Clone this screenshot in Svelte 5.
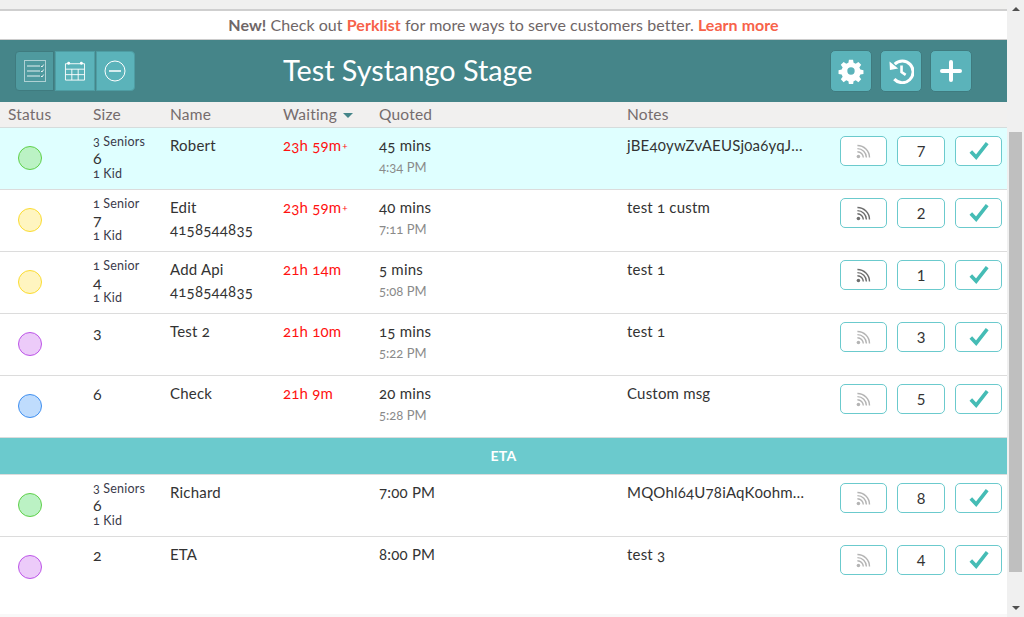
<script>
	const rows = [
		{ status: 'green', seniors: '3 Seniors', size: 6, kids: '1 Kid', name: 'Robert', waiting: '23h 59m', plus: true, quoted: '45 mins', at: '4:34 PM', notes: 'jBE40ywZvAEUSj0a6yqJ…', num: 7, active: true },
		{ status: 'yellow', seniors: '1 Senior', size: 7, kids: '1 Kid', name: 'Edit', phone: '4158544835', waiting: '23h 59m', plus: true, quoted: '40 mins', at: '7:11 PM', notes: 'test 1 custm', num: 2, wifi: true },
		{ status: 'yellow', seniors: '1 Senior', size: 4, kids: '1 Kid', name: 'Add Api', phone: '4158544835', waiting: '21h 14m', quoted: '5 mins', at: '5:08 PM', notes: 'test 1', num: 1, wifi: true },
		{ status: 'purple', size: 3, name: 'Test 2', waiting: '21h 10m', quoted: '15 mins', at: '5:22 PM', notes: 'test 1', num: 3 },
		{ status: 'blue', size: 6, name: 'Check', waiting: '21h 9m', quoted: '20 mins', at: '5:28 PM', notes: 'Custom msg', num: 5 }
	];
	const eta = [
		{ status: 'green', seniors: '3 Seniors', size: 6, kids: '1 Kid', name: 'Richard', quoted: '7:00 PM', notes: 'MQOhl64U78iAqK0ohm…', num: 8 },
		{ status: 'purple', size: 2, name: 'ETA', quoted: '8:00 PM', notes: 'test 3', num: 4 }
	];
</script>

{#snippet row(r)}
	<div class="row" class:active={r.active}>
		<div class="cell status"><span class="dot {r.status}"></span></div>
		<div class="cell size">
			{#if r.seniors}<div class="sub">{r.seniors}</div>{/if}
			<div class="count" class:plain={!r.seniors}>{r.size}</div>
			{#if r.kids}<div class="sub">{r.kids}</div>{/if}
		</div>
		<div class="cell name">
			<div>{r.name}</div>
			{#if r.phone}<div class="phone">{r.phone}</div>{/if}
		</div>
		<div class="cell waiting">{r.waiting}{#if r.plus}<span class="plus">+</span>{/if}</div>
		<div class="cell quoted">
			<div>{r.quoted}</div>
			{#if r.at}<div class="at">{r.at}</div>{/if}
		</div>
		<div class="cell notes">{r.notes}</div>
		<div class="actions">
			<button class="act" class:on={r.wifi} aria-label="notify">
				<svg viewBox="0 0 16 16" width="15" height="15" fill="none" stroke="currentColor" stroke-width="1.5">
					<circle cx="2.6" cy="13.4" r="1.9" fill="currentColor" stroke="none" />
					<path d="M1.5 8.2a6.3 6.3 0 0 1 6.3 6.3" />
					<path d="M1.5 4.9a9.6 9.6 0 0 1 9.6 9.6" />
					<path d="M1.5 1.6a12.9 12.9 0 0 1 12.9 12.9" />
				</svg>
			</button>
			<button class="act num">{r.num}</button>
			<button class="act" aria-label="done">
				<svg viewBox="0 0 20 18" width="20" height="18" fill="none" stroke="#45bcb5" stroke-width="3.6">
					<path d="M1.8 9.400l5.400 5.800L18.200 1.200" />
				</svg>
			</button>
		</div>
	</div>
{/snippet}

<div class="page">
	<div class="main">
		<div class="topline"></div>
		<div class="banner">
			<b class="new">New!</b> Check out <b class="link">Perklist</b> for more ways to serve customers better. <b class="link">Learn more</b>
		</div>
		<header>
			<div class="group">
				<button class="tb current" aria-label="list">
					<svg viewBox="0 0 22 22" width="22" height="22" fill="none" stroke="#fff">
						<rect x="0.5" y="0.5" width="21" height="21" opacity=".55" />
						<path d="M3 6h13M3 11h13M3 16h13" opacity=".85" />
						<path d="M17 6l1 1 1.6-2.4M17 11l1 1 1.6-2.4M17 16l1 1 1.6-2.4" opacity=".85" />
					</svg>
				</button>
				<button class="tb" aria-label="calendar">
					<svg viewBox="0 0 22 22" width="22" height="20" fill="none" stroke="#fff">
						<path d="M.5 3h21v18H.5zM.5 9h21M.5 15h21M7.500 9v12M14.500 9v12" />
						<circle cx="4" cy="2.500" r="1.600" fill="#fff" stroke="none" />
						<circle cx="18" cy="2.500" r="1.600" fill="#fff" stroke="none" />
					</svg>
				</button>
				<button class="tb" aria-label="remove">
					<svg viewBox="0 0 22 22" width="22" height="22" fill="none" stroke="#fff">
						<circle cx="11" cy="11" r="10" />
						<path d="M5 11h12" stroke-width="2" opacity=".75" />
					</svg>
				</button>
			</div>
			<h1>Test Systango Stage</h1>
			<div class="tools">
				<button class="tool" aria-label="settings">
					<svg viewBox="0 0 24 24" width="26" height="26" fill="#fff">
						<path fill-rule="evenodd" d="M13.900 1.500h-3.800l-.5 2.900c-.7.2-1.400.5-2 .9L5.200 3.600 2.600 6.300l1.700 2.400c-.4.6-.7 1.300-.9 2l-2.900.5v3.600l2.900.5c.2.7.5 1.400.9 2l-1.700 2.400 2.600 2.600 2.400-1.700c.6.4 1.300.7 2 .9l.5 2.900h3.800l.5-2.900c.7-.2 1.400-.5 2-.9l2.400 1.700 2.600-2.600-1.700-2.400c.4-.6.7-1.300.9-2l2.900-.5v-3.600l-2.900-.5c-.2-.7-.5-1.400-.9-2l1.700-2.400-2.600-2.700-2.400 1.700c-.6-.4-1.300-.7-2-.9zM12 8.600a3.400 3.400 0 1 1 0 6.800a3.400 3.400 0 0 1 0-6.800z" />
					</svg>
				</button>
				<button class="tool" aria-label="history">
					<svg viewBox="0 0 24 24" width="26" height="26" fill="none" stroke="#fff" stroke-width="2.800">
						<path d="M6.200 5.600A10 10 0 1 1 5.800 19.500" />
						<path d="M12.500 7v6l3.800 2.600" stroke-width="2.400" />
						<path d="M1.400 3.200l.4 7.800 7.600-1.200z" fill="#fff" stroke="none" />
					</svg>
				</button>
				<button class="tool" aria-label="add">
					<svg viewBox="0 0 22 22" width="22" height="22" fill="none" stroke="#fff" stroke-width="4" stroke-linecap="round">
						<path d="M11 2v18M2 11h18" />
					</svg>
				</button>
			</div>
		</header>
		<div class="head">
			<div class="h-status">Status</div>
			<div>Size</div>
			<div>Name</div>
			<div class="sorted">Waiting <span class="caret"></span></div>
			<div>Quoted</div>
			<div>Notes</div>
		</div>
		{#each rows as r}
			{@render row(r)}
		{/each}
		<div class="eta">ETA</div>
		<div class="list">
			{#each eta as r}
				{@render row(r)}
			{/each}
		</div>
		<div class="foot"></div>
	</div>
	<div class="scrollbar">
		<span class="arrow up"></span>
		<div class="track"><div class="thumb"></div></div>
		<span class="arrow down"></span>
	</div>
</div>

<style>
	:global(body) {
		margin: 0;
		background: #fff;
	}

	.page {
		display: flex;
		height: 617px;
		overflow: hidden;
		font-family: Lato, "Open Sans", sans-serif;
		font-variant-numeric: oldstyle-nums;
		color: #333;
		font-size: 15px;
		letter-spacing: .2px;
	}

	.main {
		flex: 0 0 1007px;
		display: flex;
		flex-direction: column;
	}

	button {
		font-family: inherit;
		padding: 0;
		display: flex;
		align-items: center;
		justify-content: center;
	}

	.topline {
		height: 9px;
		background: #f0f0ef;
		border-bottom: 2px solid #cfcfcf;
	}

	.banner {
		height: 28px;
		line-height: 28px;
		text-align: center;
		font-size: 16px;
		color: #6f6667;
		border-bottom: 1px solid #ccc;
		letter-spacing: .05px;
	}

	.new {
		color: #6f6667;
	}

	.link {
		color: #f7624a;
	}

	header {
		height: 62px;
		background: #458589;
		display: flex;
		align-items: center;
		padding: 0 35px 0 15px;
	}

	.group {
		display: flex;
		gap: 1px;
		width: 120px;
	}

	.tb {
		flex: 1;
		height: 40px;
		background: #5bb3ba;
		border: 1px solid #4e9da3;
	}

	.tb:first-child {
		border-radius: 4px 0 0 4px;
	}

	.tb:last-child {
		border-radius: 0 4px 4px 0;
	}

	.tb.current {
		background: #4f9a9f;
		border-color: #3f7b7f;
	}

	h1 {
		margin: -3px 0 0 148px;
		font-size: 28.800px;
		font-weight: 400;
		color: #fff;
		flex: 1;
		white-space: nowrap;
		letter-spacing: 0;
	}

	.tools {
		display: flex;
		gap: 8px;
	}

	.tool {
		width: 42px;
		height: 42px;
		background: #5bb3ba;
		border: 1px solid #3f7b7f;
		border-radius: 5px;
	}

	.head,
	.row {
		display: grid;
		grid-template-columns: 93px 77px 113px 96px 248px 213px 1fr;
	}

	.head {
		height: 25px;
		line-height: 25px;
		background: #f1f0ef;
		color: #756c6d;
		font-size: 15.500px;
		border-bottom: 1px solid #d5dcdc;
	}

	.h-status {
		padding-left: 8px;
	}

	.caret {
		display: inline-block;
		margin-left: 2px;
		vertical-align: 2px;
		border: 5px solid transparent;
		border-top-color: #458589;
		border-bottom: 0;
	}

	.row {
		height: 61px;
		border-bottom: 1px solid #dcdcdc;
		background: #fff;
	}

	.list .row:last-child {
		border-bottom-color: transparent;
	}

	.row.active {
		background: #dfffff;
	}

	.cell {
		padding-top: 7px;
		line-height: 20px;
		min-width: 0;
	}

	.status {
		padding: 18px 0 0 18px;
	}

	.dot {
		display: block;
		width: 22px;
		height: 22px;
		border-radius: 50%;
		border: 1.5px solid;
	}

	.green {
		background: #bbf2c4;
		border-color: #5fd04a;
	}

	.yellow {
		background: #fff5c0;
		border-color: #fbdc32;
	}

	.purple {
		background: #eccbf9;
		border-color: #bd55e8;
	}

	.blue {
		background: #bfdcfd;
		border-color: #3f8ff0;
	}

	.size {
		padding-top: 6px;
	}

	.sub {
		font-size: 12.500px;
		line-height: 15px;
		color: #3a3a4a;
	}

	.count {
		font-size: 16px;
		line-height: 17px;
	}

	.count.plain {
		line-height: 20px;
		padding-top: 2px;
	}

	.phone {
		margin-top: 2px;
	}

	.waiting {
		color: #f11;
	}

	.plus {
		font-size: 10px;
		vertical-align: 2px;
		margin-left: 1px;
	}

	.at {
		font-size: 13px;
		color: #8a8a8a;
		margin-top: 2px;
		letter-spacing: 0;
	}

	.notes {
		white-space: nowrap;
	}

	.actions {
		display: flex;
		gap: 10px;
		padding-top: 8px;
		align-items: flex-start;
	}

	.act {
		width: 47px;
		height: 30px;
		background: #fff;
		border: 1px solid #6bcacd;
		border-radius: 5px;
		color: #b4b4b4;
		font-size: 15px;
	}

	.act.on {
		color: #6e6e6e;
	}

	.act.num {
		width: 48px;
		color: #333;
	}

	.eta {
		height: 36px;
		line-height: 36px;
		background: #6bcacd;
		color: #fff;
		font-weight: 700;
		text-align: center;
		font-size: 14px;
		border-bottom: 1px solid #dcdcdc;
	}

	.foot {
		margin-top: auto;
		height: 3px;
		background: #f8f8f8;
	}

	.scrollbar {
		flex: 0 0 17px;
		background: #f0f0f0;
		display: flex;
		flex-direction: column;
		align-items: center;
	}

	.arrow {
		flex: none;
		border: 4px solid transparent;
		width: 0;
		height: 0;
	}

	.up {
		border-bottom: 4px solid #505050;
		border-top: 0;
		margin: 7px 0 6px;
	}

	.down {
		border-top: 4px solid #505050;
		border-bottom: 0;
		margin: 6px 0 7px;
	}

	.track {
		flex: 1;
		width: 100%;
		padding-top: 115px;
		box-sizing: border-box;
		display: flex;
		justify-content: center;
	}

	.thumb {
		width: 13px;
		height: 440px;
		background: #bfbfbf;
	}
</style>
